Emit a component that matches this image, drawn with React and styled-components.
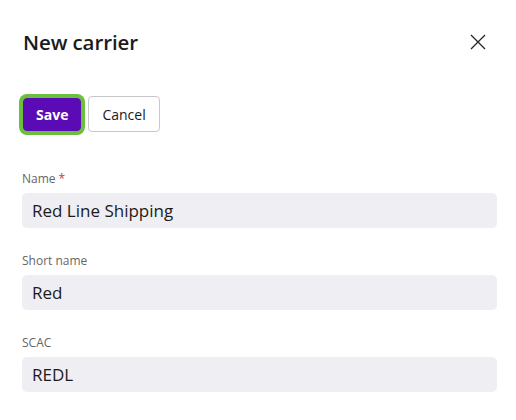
import React from 'react'
import styled, { createGlobalStyle } from 'styled-components'

const GlobalStyle = createGlobalStyle`
  html, body {
    margin: 0;
    background: #ffffff;
    font-family: "Open Sans", "Noto Sans", sans-serif;
  }
`

const Panel = styled.div`
  width: 516px;
  height: 420px;
  box-sizing: border-box;
  padding: 22px 19px 0 22px;
  display: flex;
  flex-direction: column;
`

const Header = styled.div`
  display: flex;
  justify-content: space-between;
  align-items: center;
  height: 40px;
`

const Title = styled.h1`
  margin: 0 0 0 1px;
  font-size: 20.5px;
  font-weight: 600;
  color: #1b1b1b;
  letter-spacing: -0.1px;
`

const CloseButton = styled.button`
  width: 28px;
  height: 28px;
  border: none;
  background: none;
  padding: 0;
  margin-right: 5px;
  display: flex;
  align-items: center;
  justify-content: center;
  cursor: pointer;
`

const Toolbar = styled.div`
  display: flex;
  align-items: center;
  gap: 7px;
  margin-top: 34px;
  padding-left: 1px;
`

const Button = styled.button`
  height: ${p => (p.$primary ? '33px' : '36px')};
  padding: 0 ${p => (p.$primary ? '12px' : '13px')};
  border-radius: 4px;
  font-family: inherit;
  font-size: 14px;
  font-weight: ${p => (p.$primary ? 700 : 400)};
  color: ${p => (p.$primary ? '#ffffff' : '#1b1b1b')};
  background: ${p => (p.$primary ? '#5b0bb5' : '#ffffff')};
  border: 1px solid ${p => (p.$primary ? '#5b0bb5' : '#c8c8c8')};
  box-shadow: ${p => (p.$primary ? '0 0 0 4px #6cbf3c' : 'none')};
  cursor: pointer;
`

const Form = styled.div`
  display: flex;
  flex-direction: column;
  gap: 25px;
  margin-top: 39px;
`

const Field = styled.div`
  display: flex;
  flex-direction: column;
  gap: 6px;
`

const Label = styled.label`
  font-size: 12px;
  color: #666666;
  line-height: 16px;
`

const Required = styled.span`
  color: #d13438;
  margin-left: 3px;
`

const Input = styled.input`
  height: 35px;
  box-sizing: border-box;
  border: none;
  border-radius: 5px;
  background: #efeef3;
  padding: 0 10px;
  font-family: inherit;
  font-size: 17px;
  color: #1b1b1b;
  outline: none;
`

const fields = [
  { label: 'Name', value: 'Red Line Shipping', required: true },
  { label: 'Short name', value: 'Red' },
  { label: 'SCAC', value: 'REDL' },
]

export default function App() {
  return (
    <>
      <GlobalStyle />
      <Panel>
        <Header>
          <Title>New carrier</Title>
          <CloseButton aria-label="Close">
            <svg width="16" height="16" viewBox="0 0 16 16">
              <path d="M1 1L15 15M15 1L1 15" stroke="#242424" strokeWidth="1.3" />
            </svg>
          </CloseButton>
        </Header>
        <Toolbar>
          <Button $primary>Save</Button>
          <Button>Cancel</Button>
        </Toolbar>
        <Form>
          {fields.map(f => (
            <Field key={f.label}>
              <Label>
                {f.label}
                {f.required && <Required>*</Required>}
              </Label>
              <Input defaultValue={f.value} readOnly />
            </Field>
          ))}
        </Form>
      </Panel>
    </>
  )
}
